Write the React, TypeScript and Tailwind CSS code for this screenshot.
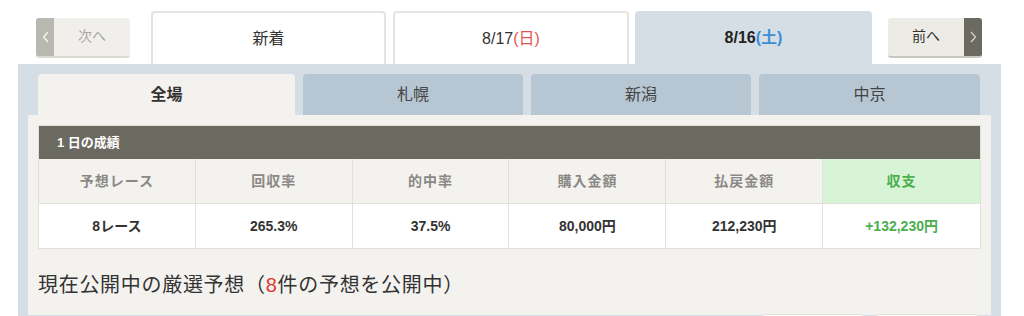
const font = "font-['Liberation_Sans','Noto_Sans_CJK_JP',sans-serif]";

function Chevron({ dir, color }: { dir: "left" | "right"; color: string }) {
  return (
    <svg width="7" height="12" viewBox="0 0 7 12" fill="none" stroke={color} strokeWidth="1.4">
      {dir === "left" ? <polyline points="6,1 1.5,6 6,11" /> : <polyline points="1,1 5.5,6 1,11" />}
    </svg>
  );
}

function ResultTable() {
  const heads = ["予想レース", "回収率", "的中率", "購入金額", "払戻金額"];
  const values = ["8レース", "265.3%", "37.5%", "80,000円", "212,230円"];
  return (
    <div className="border border-[#e2e0da]">
      <div className="bg-[#6b6a61] h-[33px] flex items-center pl-[18px] text-white text-[13px] font-bold">
        1 日の成績
      </div>
      <div className="grid grid-cols-6 h-[44px] bg-[#f3f2ee] text-[14px] font-bold text-[#8a8985]">
        {heads.map((h) => (
          <div key={h} className="flex items-center justify-center border-r border-[#e2e0da] tracking-[1px]">
            {h}
          </div>
        ))}
        <div className="flex items-center justify-center bg-[#d7f5d6] text-[#4cae4c] tracking-[1px]">収支</div>
      </div>
      <div className="grid grid-cols-6 h-[45px] bg-white text-[14px] font-bold text-[#333] border-t border-[#e2e0da]">
        {values.map((v) => (
          <div key={v} className="flex items-center justify-center border-r border-[#e2e0da]">
            {v}
          </div>
        ))}
        <div className="flex items-center justify-center text-[#4cae4c]">+132,230円</div>
      </div>
    </div>
  );
}

export default function App() {
  return (
    <div className={`w-[1024px] h-[316px] overflow-hidden bg-white ${font}`}>
      {/* date tabs */}
      <div className="flex items-center pl-[36px] pt-[11px] h-[64px]">
        <button className="flex w-[94px] h-[40px] rounded-[3px] overflow-hidden border-b-2 border-[#dcdad3] bg-[#f0efeb]">
          <span className="w-[18px] h-full bg-[#b8b7b0] flex items-center justify-center">
            <Chevron dir="left" color="#f4f4f2" />
          </span>
          <span className="flex-1 flex items-center justify-center text-[14px] text-[#a9a8a3]">次へ</span>
        </button>
        <div className="ml-[21px] w-[235px] h-[53px] bg-white border-2 border-b-0 border-[#e6e4de] rounded-t-[4px] flex items-center justify-center text-[16px] text-[#333]">
          新着
        </div>
        <div className="ml-[7px] w-[236px] h-[53px] bg-white border-2 border-b-0 border-[#e6e4de] rounded-t-[4px] flex items-center justify-center text-[16px] text-[#333]">
          8/17<span className="text-[#e4564f]">(日)</span>
        </div>
        <div className="ml-[6px] w-[237px] h-[53px] bg-[#d6dee5] rounded-t-[4px] flex items-center justify-center text-[16px] font-bold text-[#222]">
          8/16<span className="text-[#3b8ed6]">(土)</span>
        </div>
        <button className="ml-[16px] flex w-[94px] h-[40px] rounded-[3px] overflow-hidden border-b-2 border-[#c9c7c0] bg-[#ecebe6]">
          <span className="flex-1 flex items-center justify-center text-[14px] text-[#333]">前へ</span>
          <span className="w-[18px] h-full bg-[#6b6a61] flex items-center justify-center">
            <Chevron dir="right" color="#cfcec8" />
          </span>
        </button>
      </div>

      {/* main panel */}
      <div className="ml-[18px] w-[983px] h-[252px] bg-[#d6dee5] pt-[10px] px-[10px]">
        <div className="flex gap-2 px-[10px] h-[41px]">
          <div className="w-[257px] bg-[#f3f2ee] rounded-t-[4px] flex items-center justify-center text-[16px] font-bold text-[#333]">全場</div>
          <div className="w-[220px] bg-[#b6c6d2] rounded-t-[4px] flex items-center justify-center text-[16px] text-[#444]">札幌</div>
          <div className="w-[220px] bg-[#b6c6d2] rounded-t-[4px] flex items-center justify-center text-[16px] text-[#444]">新潟</div>
          <div className="w-[221px] bg-[#b6c6d2] rounded-t-[4px] flex items-center justify-center text-[16px] text-[#444]">中京</div>
        </div>
        <div className="bg-[#f3f2ee] h-[200px] pt-[10px] px-[10px]">
          <ResultTable />
          <div className="mt-[21px] text-[20px] tracking-[0.7px] leading-[30px] text-[#333]">
            現在公開中の厳選予想（<span className="text-[#e23b33]">8</span>件の予想を公開中）
          </div>
          <div className="flex justify-end gap-[10px] pr-[2px] mt-[14px]">
            <div className="w-[104px] h-[30px] bg-white border border-[#e2e0da] rounded-[4px]" />
            <div className="w-[104px] h-[30px] bg-white border border-[#e2e0da] rounded-[4px]" />
          </div>
        </div>
      </div>
    </div>
  );
}
